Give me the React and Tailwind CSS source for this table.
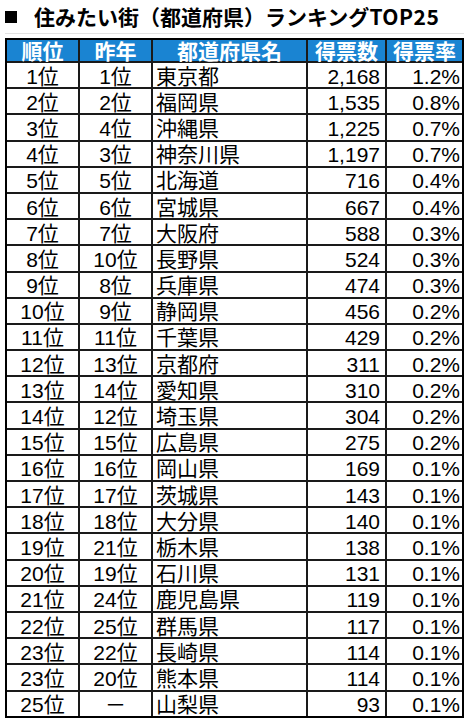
const ROWS = [
  ['1位', '1位', '東京都', '2,168', '1.2%'],
  ['2位', '2位', '福岡県', '1,535', '0.8%'],
  ['3位', '4位', '沖縄県', '1,225', '0.7%'],
  ['4位', '3位', '神奈川県', '1,197', '0.7%'],
  ['5位', '5位', '北海道', '716', '0.4%'],
  ['6位', '6位', '宮城県', '667', '0.4%'],
  ['7位', '7位', '大阪府', '588', '0.3%'],
  ['8位', '10位', '長野県', '524', '0.3%'],
  ['9位', '8位', '兵庫県', '474', '0.3%'],
  ['10位', '9位', '静岡県', '456', '0.2%'],
  ['11位', '11位', '千葉県', '429', '0.2%'],
  ['12位', '13位', '京都府', '311', '0.2%'],
  ['13位', '14位', '愛知県', '310', '0.2%'],
  ['14位', '12位', '埼玉県', '304', '0.2%'],
  ['15位', '15位', '広島県', '275', '0.2%'],
  ['16位', '16位', '岡山県', '169', '0.1%'],
  ['17位', '17位', '茨城県', '143', '0.1%'],
  ['18位', '18位', '大分県', '140', '0.1%'],
  ['19位', '21位', '栃木県', '138', '0.1%'],
  ['20位', '19位', '石川県', '131', '0.1%'],
  ['21位', '24位', '鹿児島県', '119', '0.1%'],
  ['22位', '25位', '群馬県', '117', '0.1%'],
  ['23位', '22位', '長崎県', '114', '0.1%'],
  ['23位', '20位', '熊本県', '114', '0.1%'],
  ['25位', '－', '山梨県', '93', '0.1%'],
]

const HEAD = ['順位', '昨年', '都道府県名', '得票数', '得票率']

// column widths include the 2px left rule of each cell after the first
const GRID = 'grid grid-cols-[71px_73px_155px_79px_77px]'

function Cell({ first, align, children, className = '' }) {
  const justify = align === 'left' ? 'justify-start pl-[3px]' : align === 'right' ? 'justify-end' : 'justify-center'
  return (
    <div className={`flex items-center ${justify} ${first ? '' : 'border-l-2 border-[#1a1a1a]'} ${className}`}>
      {children}
    </div>
  )
}

export default function App() {
  return (
    <div className="w-[474px] h-[725px] bg-white text-black font-['Liberation_Sans','Noto_Sans_CJK_JP',sans-serif]">
      {/* Title */}
      <div className="h-[33px] flex items-center pl-[5px] font-['Noto_Sans_CJK_JP',sans-serif]">
        <span className="w-[12px] h-[12px] bg-black shrink-0" />
        <h1 className="ml-[17px] text-[21px] font-bold leading-none whitespace-nowrap">
          住みたい街（都道府県）ランキング<span className="tracking-[0.5px]">TOP25</span>
        </h1>
      </div>
      <div className="ml-[5px] w-[459px] h-px bg-[#e2e2e2]" />

      {/* Table */}
      <div className="mt-[4px] ml-[5px] w-[459px] border-2 border-black">
        <div className={`${GRID} h-[21px] bg-[#1a84d2] text-white font-bold text-[21px] leading-none`}>
          {HEAD.map((h, i) => (
            <Cell key={h} first={i === 0} className="pt-[1px]">{h}</Cell>
          ))}
        </div>
        {ROWS.map((r, idx) => (
          <div key={idx} className={`${GRID} h-[26.2px] border-t-2 border-[#1a1a1a] text-[21px] leading-none`}>
            <Cell first className="pt-[2px]">{r[0]}</Cell>
            <Cell className="pt-[2px]">{r[1]}</Cell>
            <Cell align="left" className="pt-[2px]">{r[2]}</Cell>
            <Cell align="right" className="pt-[2px] pr-[5px]">{r[3]}</Cell>
            <Cell align="right" className="pt-[2px] pr-[2px]">{r[4]}</Cell>
          </div>
        ))}
      </div>
    </div>
  )
}
